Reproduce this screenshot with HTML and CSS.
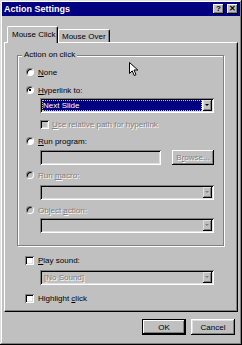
FILE: index.html
```html
<!DOCTYPE html>
<html lang="en">
<head>
    <meta charset="UTF-8">
    <title>Action Settings</title>
    <link rel="stylesheet" href="styles.css">
</head>
<body>
    <div class="dialog">
        <div class="titlebar">
            <span class="title">Action Settings</span>
            <div class="title-buttons">
                <span class="tbtn">?</span>
                <span class="tbtn">&#x2715;</span>
            </div>
        </div>
        <div class="body">
            <div class="tabs">
                <div class="tab active">Mouse Click</div>
                <div class="tab">Mouse Over</div>
            </div>
            <div class="panel">
                <div class="group">
                    <span class="legend">Action on click</span>
                    <div class="row first">
                        <span class="radio"></span><span><u>N</u>one</span>
                    </div>
                    <div class="row gap6">
                        <span class="radio checked"></span><span><u>H</u>yperlink to:</span>
                    </div>
                    <div class="combo indent gap2">
                        <span class="combo-value selected">Next Slide</span>
                        <span class="combo-arrow"></span>
                    </div>
                    <div class="row indent gap5">
                        <span class="check disabled"></span><span class="dis"><u>U</u>se relative path for hyperlink</span>
                    </div>
                    <div class="row gap5">
                        <span class="radio"></span><span><u>R</u>un program:</span>
                    </div>
                    <div class="field-row indent gap3">
                        <span class="textbox"></span>
                        <span class="small-btn dis">B<u>r</u>owse...</span>
                    </div>
                    <div class="row gap4">
                        <span class="radio disabled"></span><span class="dis">Run <u>m</u>acro:</span>
                    </div>
                    <div class="combo indent gap4 off">
                        <span class="combo-value"></span>
                        <span class="combo-arrow"></span>
                    </div>
                    <div class="row gap4">
                        <span class="radio disabled"></span><span class="dis">Object <u>a</u>ction:</span>
                    </div>
                    <div class="combo indent gap2 off">
                        <span class="combo-value"></span>
                        <span class="combo-arrow"></span>
                    </div>
                </div>
                <div class="row outside play">
                    <span class="check"></span><span><u>P</u>lay sound:</span>
                </div>
                <div class="combo sound gap4 off">
                    <span class="combo-value dis">[No Sound]</span>
                    <span class="combo-arrow"></span>
                </div>
                <div class="row outside gap7">
                    <span class="check"></span><span>Highlight <u>c</u>lick</span>
                </div>
            </div>
            <div class="buttons">
                <button class="btn default">OK</button>
                <button class="btn">Cancel</button>
            </div>
        </div>
        <svg class="cursor" width="10" height="15" viewBox="0 0 10 15">
            <path d="M0.5 0.5 L0.5 11.5 L3.2 8.8 L5.2 13.5 L7 12.7 L5 8 L8.8 8 Z" fill="#fff" stroke="#000" stroke-width="1"/>
        </svg>
    </div>
</body>
</html>
```

FILE: styles.css
```css
* {
    box-sizing: border-box;
}

body {
    margin: 0;
    font-family: "Liberation Sans", Arial, sans-serif;
    font-size: 8px;
    color: #000;
    background: #c0c0c0;
}

.dialog {
    position: relative;
    width: 242px;
    height: 345px;
    padding: 2px;
    background: #c0c0c0;
    box-shadow: inset -1px -1px 0 #000, inset 1px 1px 0 #dfdfdf,
        inset -2px -2px 0 #808080, inset 2px 2px 0 #fff;
}

.titlebar {
    display: flex;
    align-items: center;
    justify-content: space-between;
    height: 14px;
    padding: 0 2px 0 2px;
    background: #000080;
}

.title {
    color: #fff;
    font-weight: bold;
    font-size: 9px;
}

.title-buttons {
    display: flex;
    gap: 3px;
}

.tbtn {
    display: flex;
    align-items: center;
    justify-content: center;
    width: 11px;
    height: 10px;
    background: #c0c0c0;
    font-weight: bold;
    font-size: 8px;
    line-height: 1;
    box-shadow: inset -1px -1px 0 #000, inset 1px 1px 0 #fff, inset -2px -2px 0 #808080;
}

.body {
    padding: 0 2px;
}

/* tabs */
.tabs {
    display: flex;
    align-items: flex-end;
    height: 16px;
    margin-top: 10px;
    padding-left: 3px;
}

.tab {
    display: flex;
    align-items: center;
    width: 52px;
    height: 13px;
    padding-left: 3px;
    border-top: 1px solid #fff;
    border-left: 1px solid #fff;
    border-right: 1px solid #000;
    border-radius: 2px 2px 0 0;
    box-shadow: inset -1px 0 0 #808080;
}

.tab.active {
    position: relative;
    z-index: 1;
    width: 51px;
    height: 17px;
    margin-bottom: -1px;
    padding-left: 4px;
    padding-bottom: 1px;
    background: #c0c0c0;
}

.panel {
    height: 270px;
    padding: 12px 0 0 12px;
    border-top: 1px solid #fff;
    border-left: 1px solid #fff;
    border-right: 1px solid #000;
    border-bottom: 1px solid #000;
    box-shadow: inset -1px -1px 0 #808080;
}

/* group box */
.group {
    position: relative;
    width: 207px;
    height: 191px;
    padding-left: 8px;
    border: 1px solid #808080;
    box-shadow: inset 1px 1px 0 #fff, 1px 1px 0 #fff;
}

.legend {
    position: absolute;
    left: 4px;
    top: -6px;
    padding: 0 2px;
    line-height: 10px;
    background: #c0c0c0;
}

.row {
    display: flex;
    align-items: center;
    height: 12px;
}

.first { margin-top: 10px; }
.gap2 { margin-top: 2px; }
.gap3 { margin-top: 3px; }
.gap4 { margin-top: 4px; }
.gap5 { margin-top: 5px; }
.gap6 { margin-top: 6px; }
.gap7 { margin-top: 7px; }

.indent {
    margin-left: 14px;
}

.radio {
    position: relative;
    width: 8px;
    height: 8px;
    margin-right: 4px;
    border-radius: 50%;
    background: #fff;
    border: 1px solid;
    border-color: #808080 #fff #fff #808080;
    box-shadow: inset 1px 1px 0 #000;
}

.radio.checked::after {
    content: "";
    position: absolute;
    left: 2px;
    top: 2px;
    width: 2px;
    height: 2px;
    background: #000;
}

.radio.disabled {
    background: #c0c0c0;
}

.check {
    width: 9px;
    height: 9px;
    margin-right: 4px;
    background: #fff;
    box-shadow: inset 1px 1px 0 #808080, inset -1px -1px 0 #fff,
        inset 2px 2px 0 #000, inset -2px -2px 0 #dfdfdf;
}

.check.disabled {
    margin-right: 3px;
    background: #c0c0c0;
}

.dis {
    color: #808080;
    text-shadow: 1px 1px 0 #fff;
}

/* combos and fields */
.combo {
    display: flex;
    width: 174px;
    height: 15px;
    padding: 2px;
    background: #fff;
    box-shadow: inset 1px 1px 0 #808080, inset -1px -1px 0 #fff,
        inset 2px 2px 0 #000, inset -2px -2px 0 #dfdfdf;
}

.combo.off {
    background: #c0c0c0;
}

.combo-value {
    flex: 1;
    display: flex;
    align-items: center;
    padding-left: 2px;
}

.combo-value.selected {
    margin: 0 1px 0 0;
    padding-left: 1px;
    background: #000080;
    color: #fff;
    outline: 1px dotted #d8d050;
    outline-offset: -1px;
}

.combo-arrow {
    position: relative;
    width: 9px;
    background: #c0c0c0;
    box-shadow: inset -1px -1px 0 #000, inset 1px 1px 0 #dfdfdf, inset -2px -2px 0 #808080;
}

.combo-arrow::after {
    content: "";
    position: absolute;
    left: 2px;
    top: 4px;
    border-left: 2px solid transparent;
    border-right: 2px solid transparent;
    border-top: 2px solid #000;
}

.combo.off .combo-arrow::after {
    border-top-color: #808080;
}

.field-row {
    display: flex;
    height: 15px;
}

.textbox {
    width: 121px;
    background: #c0c0c0;
    box-shadow: inset 1px 1px 0 #808080, inset -1px -1px 0 #fff,
        inset 2px 2px 0 #000, inset -2px -2px 0 #dfdfdf;
}

.small-btn {
    display: flex;
    align-items: center;
    justify-content: center;
    width: 42px;
    margin-left: 11px;
    box-shadow: inset -1px -1px 0 #000, inset 1px 1px 0 #fff, inset -2px -2px 0 #808080;
}

.outside {
    margin-left: 8px;
}

.play {
    margin-top: 8px;
}

.sound {
    margin-left: 23px;
}

/* bottom buttons */
.buttons {
    display: flex;
    justify-content: flex-end;
    gap: 5px;
    margin-top: 7px;
    padding-right: 3px;
}

.btn {
    width: 44px;
    height: 16px;
    padding: 0;
    border: none;
    background: #c0c0c0;
    font: inherit;
    color: #000;
    box-shadow: inset -1px -1px 0 #000, inset 1px 1px 0 #fff,
        inset -2px -2px 0 #808080, inset 2px 2px 0 #dfdfdf;
}

.btn.default {
    border: 1px solid #000;
    box-shadow: inset -1px -1px 0 #000, inset 1px 1px 0 #fff, inset -2px -2px 0 #808080;
}

.cursor {
    position: absolute;
    left: 129px;
    top: 62px;
}
```
